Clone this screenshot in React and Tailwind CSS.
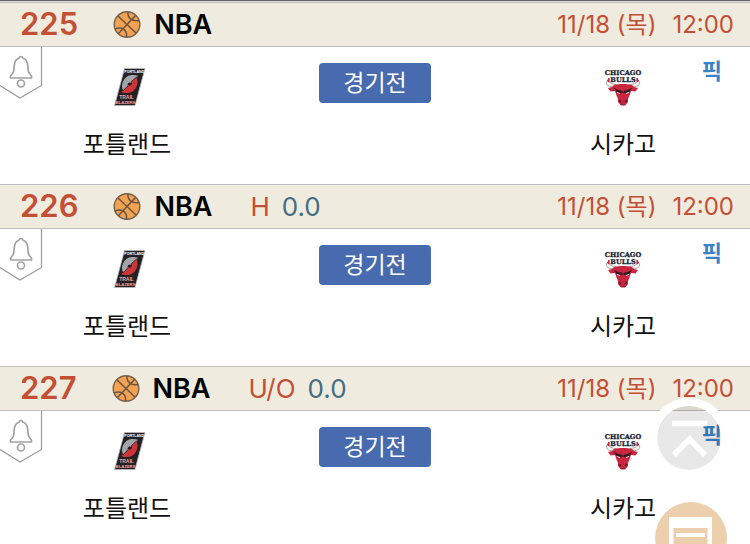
const games = [
  { id: 225, line: null },
  { id: 226, line: { type: "H", value: "0.0" } },
  { id: 227, line: { type: "U/O", value: "0.0" } },
];

function Basketball() {
  return (
    <svg viewBox="0 0 28 28" className="size-7 shrink-0" aria-hidden="true">
      <circle cx="14" cy="13.500" r="12.8" fill="#f4a251" stroke="#72614d" strokeWidth="1.4" />
      <path
        d="M5 5 23 22M22.500 4.500 5.500 22.500M15 1C14.500 6.500 18.500 11 26 9.500M2 18C8.500 15.500 14.500 18.500 13.500 26"
        fill="none"
        stroke="#685543"
        strokeWidth="1.5"
      />
    </svg>
  );
}

function AlertButton() {
  return (
    <button type="button" aria-label="알림" className="block h-[53px] w-[43px]">
      <svg viewBox="0 0 43 53" className="h-[53px] w-[43px]" fill="none" aria-hidden="true">
        <path d="M41.500 0V38.500L20 51 0 38.500" stroke="#999" strokeWidth="1.200" />
        <path d="M10.500 31v-2c3.200-3 3.500-5 3.700-10 .2-4 2-7 5-8 .2-2 3.400-2 3.600 0 3 1 4.800 4 5 8 .2 5 .5 7 3.700 10v2Z" stroke="#a2a2a2" strokeWidth="1.700" strokeLinejoin="round" />
        <circle cx="21" cy="36.500" r="3.500" stroke="#a2a2a2" strokeWidth="1.700" />
      </svg>
    </button>
  );
}

function BlazersLogo() {
  return (
    <svg viewBox="0 0 40 40" className="size-10" role="img" aria-label="Portland Trail Blazers">
      <path d="M17.500 1.500h20.500L28 38.500H7.500Z" fill="#242124" stroke="#bdbbbb" strokeWidth=".8" />
      <g transform="translate(22.800 17)">
        <path d="M-6.500 7C-10 1-6-8.500 2-9c3 0 5 0 6.500 1L1-1C-1-2-3 0-2 2Z" fill="#a2a6ab" />
        <path d="M6.500-7C10-1 6 8.500-2 9c-3 0-5 0-6.500-1L-1 1C1 2 3 0 2-2Z" fill="#cf3439" />
        <path d="m-7 7 5-5M1-2l7-6" stroke="#242124" strokeWidth=".8" />
        <circle r="1.500" fill="#242124" />
      </g>
      <g fontFamily="Liberation Sans, sans-serif" fontWeight="700" textAnchor="middle">
        <text x="27.300" y="6" fontSize="3.600" fill="#fff">PORTLAND</text>
        <text x="19.500" y="31.500" fontSize="5" fill="#efa3a1">TRAIL</text>
        <text x="18.500" y="37" fontSize="4.200" fill="#efa3a1">BLAZERS</text>
      </g>
    </svg>
  );
}

function BullsLogo() {
  return (
    <svg viewBox="0 0 40 40" className="size-10" role="img" aria-label="Chicago Bulls">
      <text fontFamily="DejaVu Serif, serif" fontWeight="700" fontSize="6.600" fill="#172331" stroke="#172331" strokeWidth=".3" textAnchor="middle">
        <tspan x="20" y="7.500">CHICAGO</tspan>
        <tspan x="20" y="14.500">BULLS</tspan>
      </text>
      <path d="M6 12C1 16 3 20 12 20l1-2.500C7 17 5 15 6 12ZM34 12c5 4 3 8-6 8l-1-2.500C33 17 35 15 34 12Z" fill="#f7f4f1" stroke="#706d70" strokeWidth=".6" />
      <path d="m6 11-1.500 3 1.500 1ZM34 11l1.500 3-1.500 1Z" fill="#c51f3e" stroke="#c51f3e" />
      <path d="M11 18c5-1.200 13-1.200 18 0l2 2 4 1-2.500 3.500-4.500-.5-1.500 4.500-1.500 3.500v3L22 38.500h-4L15 35v-3l-1.500-3.500L12 24l-4.500.500L5 21l4-1Z" fill="#ca263f" />
      <path d="m11 21 4 2 4 1 1 1.500L21 24l4-1 4-2-3 4-4 1-2-1-2 1-4-1ZM16 33l2 1-1 1.500ZM24 33l-2 1 1 1.500ZM17 37.500h6" fill="#281b23" stroke="#281b23" strokeWidth=".3" />
      <path d="m14 25.500 3 1M26 25.500l-3 1" stroke="#fff" strokeWidth=".8" />
    </svg>
  );
}

function Team({ name, children }) {
  return (
    <div className="flex w-[254px] flex-col items-center pt-5">
      {children}
      <span className="mt-5 text-[24px] leading-9 text-[#111]">{name}</span>
    </div>
  );
}

function Game({ game }) {
  return (
    <article>
      <header className="flex h-[45px] items-center border-y border-[#bdbdbd] bg-[#efecdf] pr-4 pl-5">
        <span className="text-[31px] font-semibold text-[#c44f34]">{game.id}</span>
        <span className="ml-[35px] flex items-center gap-[13px]">
          <Basketball />
          <h2 className="pt-px text-[27px] font-semibold text-black">NBA</h2>
        </span>
        {game.line && (
          <span className="ml-[38px] flex gap-3 text-[26px]">
            <span className="text-[#c44f34]">{game.line.type}</span>
            <span className="text-[#456d82]">{game.line.value}</span>
          </span>
        )}
        <time className="ml-auto flex gap-4 pt-px text-[24px] text-[#c44f34]">
          <span>11/18 (목)</span>
          <span>12:00</span>
        </time>
      </header>
      <div className="relative flex h-[137px] items-start justify-between">
        <div className="absolute top-0 left-0">
          <AlertButton />
        </div>
        <Team name="포틀랜드"><BlazersLogo /></Team>
        <button type="button" className="mt-4 h-10 w-28 rounded bg-[#486aaf] text-[23px] leading-9 text-white">경기전</button>
        <Team name="시카고"><BullsLogo /></Team>
        <a href="#pick" className="absolute top-2 right-7 text-[22px] leading-8 font-bold text-[#3b82c8]">픽</a>
      </div>
    </article>
  );
}

export default function App() {
  return (
    <main className="min-h-screen overflow-hidden bg-white font-['Inter','Noto_Sans_CJK_KR',sans-serif]">
      <div className="h-0.5 border-t border-[#666168] bg-[#dddcd9]" />
      {games.map((game) => <Game key={game.id} game={game} />)}
      <button type="button" aria-label="맨 위로" className="fixed right-[21px] bottom-[66px] size-20 rounded-full border-8 border-white bg-black/9 bg-clip-padding">
        <svg viewBox="0 0 64 64" className="size-16" fill="none" stroke="white" strokeWidth="5.500" aria-hidden="true">
          <path d="M15 17.500h35M17 49l15.500-16L48 49" />
        </svg>
      </button>
      <button type="button" aria-label="게시판" className="fixed right-[23px] -bottom-[30px] size-18 rounded-full bg-[#ecd0ae]">
        <svg viewBox="0 0 72 72" className="size-18" fill="none" stroke="white" strokeWidth="4" aria-hidden="true">
          <path d="M14 15h43v43H14Z" fill="white" stroke="none" />
          <path d="M18.500 26h34v30h-34Z" fill="#ecd0ae" stroke="none" />
          <path d="M21 33h29M21 46h29" />
        </svg>
      </button>
    </main>
  );
}
